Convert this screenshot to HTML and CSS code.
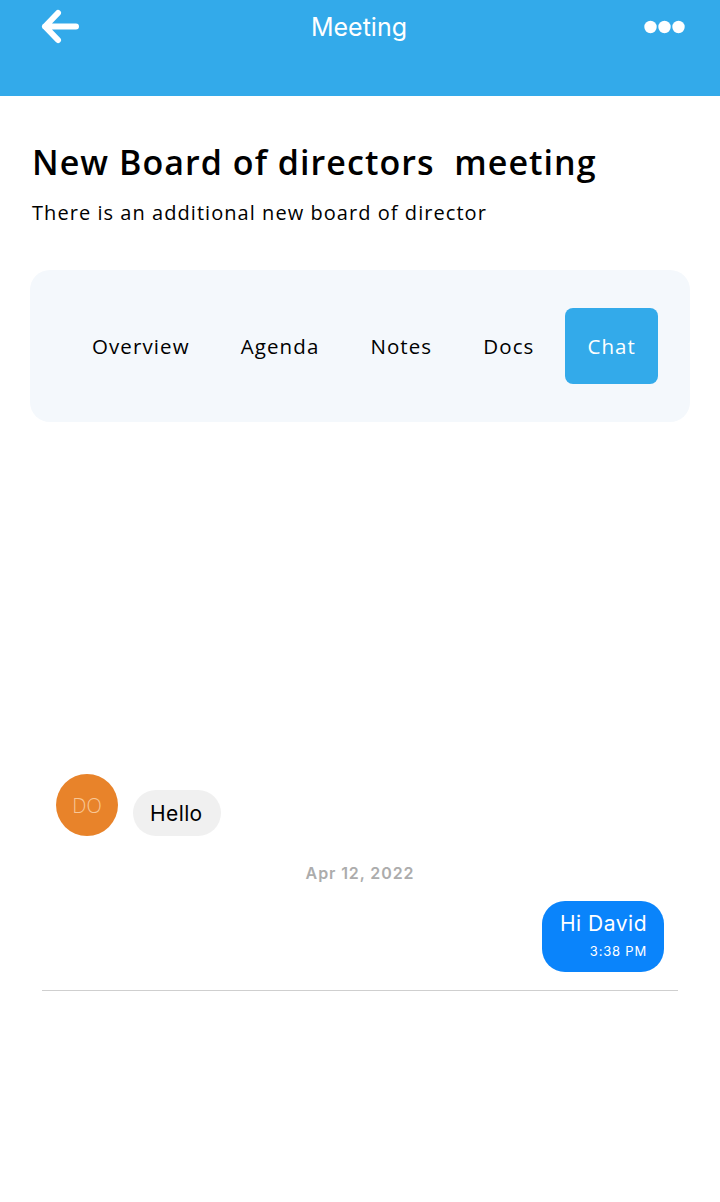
FILE: index.html
```html
<!DOCTYPE html>
<html>
<head>
<meta charset="utf-8">
<link rel="stylesheet" href="styles.css">
</head>
<body>
<header class="topbar">
  <div class="topbar-row">
    <svg class="back" width="40" height="40" viewBox="0 0 40 40">
      <path d="M18 6 L5 19.5 L18 33 M5 19.5 L36 19.5" fill="none" stroke="#fff" stroke-width="6" stroke-linecap="round" stroke-linejoin="round"/>
    </svg>
    <div class="topbar-title">Meeting</div>
    <svg class="more" width="44" height="16" viewBox="0 0 44 16">
      <circle cx="8.5" cy="8" r="6.2" fill="#fff"/>
      <circle cx="22.5" cy="8" r="6.2" fill="#fff"/>
      <circle cx="36.5" cy="8" r="6.2" fill="#fff"/>
    </svg>
  </div>
</header>

<main class="content">
  <h1 class="title">New Board of directors &nbsp;meeting</h1>
  <p class="subtitle">There is an additional new board of director</p>

  <nav class="tabs">
    <div class="tab">Overview</div>
    <div class="tab">Agenda</div>
    <div class="tab">Notes</div>
    <div class="tab">Docs</div>
    <div class="tab active">Chat</div>
  </nav>

  <section class="chat">
    <div class="msg-in">
      <div class="avatar">DO</div>
      <div class="bubble-in">Hello</div>
    </div>
    <div class="date">Apr 12, 2022</div>
    <div class="msg-out">
      <div class="bubble-out">
        <div class="out-text">Hi David</div>
        <div class="out-time">3:38 PM</div>
      </div>
    </div>
    <div class="divider"></div>
  </section>
</main>
</body>
</html>
```

FILE: styles.css
```css
* { box-sizing: border-box; }
html, body { margin: 0; padding: 0; background: #fff; }
body { width: 720px; height: 1202px; overflow: hidden; font-family: "Open Sans", sans-serif; color: #000; }

.topbar { background: #33aaea; height: 96px; padding: 7px 34px 0 40px; }
.topbar-row { display: flex; align-items: center; justify-content: space-between; height: 40px; }
.back { display: block; }
.topbar-title { font-family: Inter, sans-serif; color: #fff; font-size: 25px; font-weight: 400; margin-left: -4px; }
.more { display: block; }

.content { padding: 0; }
.title { margin: 46px 32px 0; font-size: 34px; line-height: 40px; font-weight: 600; letter-spacing: 1.05px; }
.subtitle { margin: 18px 32px 0; font-size: 20px; line-height: 26px; font-weight: 400; letter-spacing: 1.05px; }

.tabs { margin: 44px 30px 0; height: 152px; background: #f4f8fc; border-radius: 20px; display: flex; align-items: center; justify-content: center; gap: 11px; padding-left: 10px; }
.tab { font-size: 20.5px; line-height: 76px; height: 76px; padding: 0 20px; border-radius: 8px; letter-spacing: 1.1px; }
.tab.active { background: #33aaea; color: #fff; padding: 0 22px; }

.chat { padding: 352px 42px 0; }
.msg-in { display: flex; align-items: flex-end; gap: 15px; padding-left: 14px; }
.avatar { width: 62px; height: 62px; border-radius: 50%; background: #e8832a; color: #f8c796; font-family: "Open Sans", sans-serif; font-weight: 300; font-size: 20px; display: flex; align-items: center; justify-content: center; }
.bubble-in { background: #f0f0f0; border-radius: 23px; height: 46px; padding: 0 18px 0 17px; display: flex; align-items: center; font-family: Inter, sans-serif; font-size: 21px; letter-spacing: 0.4px; }
.date { text-align: center; margin-top: 27px; font-family: Inter, sans-serif; font-weight: 600; font-size: 16px; line-height: 20px; color: #acacac; letter-spacing: 0.9px; }
.msg-out { display: flex; justify-content: flex-end; margin-top: 18px; padding-right: 14px; }
.bubble-out { background: #0a84fb; color: #fff; border-radius: 23px; height: 71px; padding: 10px 17px 0 18px; display: flex; flex-direction: column; align-items: flex-end; font-family: Inter, sans-serif; }
.out-text { font-size: 21px; line-height: 26px; letter-spacing: 0.5px; }
.out-time { font-size: 13px; line-height: 16px; margin-top: 6px; letter-spacing: 0.8px; }
.divider { margin-top: 18px; height: 1px; background: #cfcfcf; }
```
